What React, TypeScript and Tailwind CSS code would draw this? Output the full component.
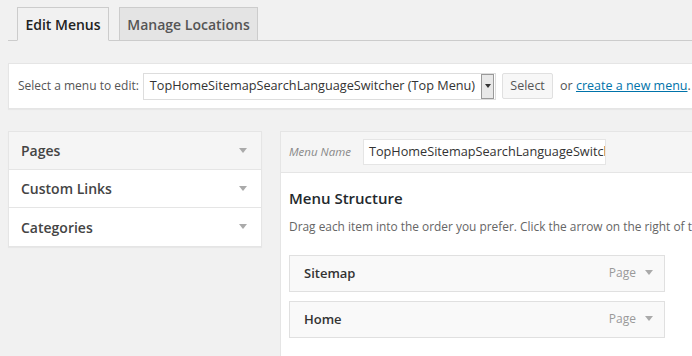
import React from "react";

function Caret({ className = "" }: { className?: string }) {
  return (
    <svg className={className} width="8" height="6" viewBox="0 0 8 6">
      <path d="M0 0h8L4 5z" fill="currentColor" />
    </svg>
  );
}

export default function App() {
  return (
    <div
      className="w-[692px] h-[356px] overflow-hidden bg-[#f1f1f1] text-[#444]"
      style={{ fontFamily: '"Open Sans", "Liberation Sans", sans-serif' }}
    >
      {/* Tabs */}
      <div className="ml-[8px] pt-[7px] flex items-end border-b border-[#ccc] h-[41px]">
        <div className="ml-[9px] h-[34px] w-[92px] -mb-px flex items-center justify-center border border-[#ccc] border-b-[#f1f1f1] bg-[#f1f1f1] text-[14px] font-semibold text-[#222]">
          Edit Menus
        </div>
        <div className="ml-[10px] h-[33px] w-[139px] flex items-center justify-center border border-b-0 border-[#ccc] bg-[#e4e4e4] text-[14px] font-semibold text-[#555]">
          Manage Locations
        </div>
      </div>

      {/* Select bar */}
      <div className="ml-[8px] mt-[22px] h-[46px] w-[700px] bg-white border border-[#e5e5e5] shadow-[0_1px_1px_rgba(0,0,0,0.04)] flex items-center pl-[9px]">
        <span className="shrink-0 text-[12px] text-[#555] whitespace-nowrap">Select a menu to edit:</span>
        <div className="shrink-0 ml-[4px] flex items-center h-[27px] border border-[#ddd] bg-white whitespace-nowrap">
          <span className="pl-[6px] pr-[6px] text-[12.7px] text-[#333]">
            TopHomeSitemapSearchLanguageSwitcher (Top Menu)
          </span>
          <span className="w-[13px] h-[25px] mr-px border border-[#999] bg-[#e8e8e8] flex items-center justify-center text-[#333]">
            <svg width="6" height="4" viewBox="0 0 6 4">
              <path d="M0 0h6L3 4z" fill="currentColor" />
            </svg>
          </span>
        </div>
        <button className="shrink-0 ml-[6px] h-[26px] w-[51px] border border-[#e0e0e0] bg-[#f7f7f7] rounded-[2px] text-[12.5px] text-[#555]">
          Select
        </button>
        <span className="shrink-0 ml-[7px] text-[#555] whitespace-nowrap text-[12.5px]">
          or{" "}
          <a className="text-[#0073aa] underline">create a new menu</a>.
        </span>
      </div>

      {/* Panels */}
      <div className="mt-[22px] ml-[8px] flex items-start gap-[18px]">
        <div className="shrink-0 w-[254px] bg-white border border-[#e5e5e5] shadow-[0_1px_1px_rgba(0,0,0,0.04)]">
          {[
            { label: "Pages", bg: "bg-[#f5f5f5]" },
            { label: "Custom Links", bg: "bg-white" },
            { label: "Categories", bg: "bg-white" },
          ].map((r, i) => (
            <div
              key={r.label}
              className={`h-[38px] flex items-center justify-between pl-[12px] pr-[14px] ${r.bg} ${
                i < 2 ? "border-b border-[#e5e5e5]" : ""
              }`}
            >
              <span className="text-[14px] font-semibold text-[#444]">{r.label}</span>
              <Caret className="text-[#aaa]" />
            </div>
          ))}
        </div>

        <div className="shrink-0 w-[430px] h-[240px] bg-white border border-[#e5e5e5] border-r-0">
          <div className="h-[41px] bg-[#f5f5f5] border-b border-[#e5e5e5] flex items-center pl-[8px]">
            <span className="text-[11.5px] italic text-[#888]">Menu Name</span>
            <div className="ml-[12px] h-[26px] w-[243px] bg-white border border-[#e5e5e5] flex items-center pl-[5px] overflow-hidden whitespace-nowrap text-[12.7px] text-[#333]">
              TopHomeSitemapSearchLanguageSwitcher
            </div>
          </div>
          <div className="pl-[8px] pt-[14px]">
            <h3 className="text-[15px] font-semibold text-[#23282d] leading-[22px]">Menu Structure</h3>
            <p className="mt-[9px] text-[11.9px] text-[#666] whitespace-nowrap">
              Drag each item into the order you prefer. Click the arrow on the right of the item to reveal additional configuration options.
            </p>
            <div className="mt-[19px] flex flex-col gap-[9px] w-[376px]">
              {["Sitemap", "Home"].map((t) => (
                <div
                  key={t}
                  className="h-[37px] bg-[#f9f9f9] border border-[#e0e0e0] flex items-center justify-between pl-[14px] pr-[11px]"
                >
                  <span className="text-[13px] font-semibold text-[#333]">{t}</span>
                  <span className="flex items-center gap-[9px]">
                    <span className="text-[12px] text-[#999]">Page</span>
                    <Caret className="text-[#aaa]" />
                  </span>
                </div>
              ))}
            </div>
          </div>
        </div>
      </div>
    </div>
  );
}
